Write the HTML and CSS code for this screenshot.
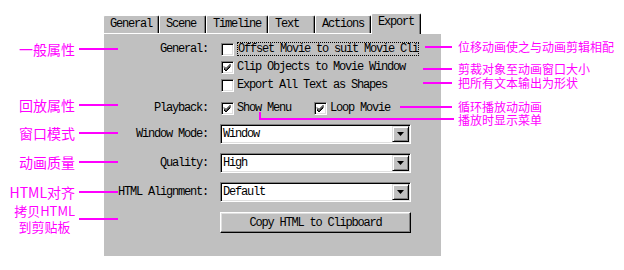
FILE: index.html
```html
<!DOCTYPE html>
<html lang="zh-CN">
  <head>
    <meta charset="UTF-8" />
    <meta name="viewport" content="width=device-width, initial-scale=1.0" />
    <title>Publish Settings - Export</title>
    <link rel="stylesheet" href="styles.css">
  </head>
  <body>
    <div class="stage">
      <div class="dialog">
        <div class="tabs">
          <span class="tab">General</span>
          <span class="tab">Scene</span>
          <span class="tab">Timeline</span>
          <span class="tab">Text</span>
          <span class="tab">Actions</span>
          <span class="tab active">Export</span>
        </div>

        <div class="panel">
          <div class="row">
            <span class="label">General:</span>
            <div class="checks">
              <div class="check">
                <span class="box"></span>
                <span class="focus">Offset Movie to suit Movie Clips</span>
              </div>
              <div class="check">
                <span class="box">
                  <svg viewBox="0 0 9 9" width="9" height="9"><path d="M1 3.5 L3 5.5 L7.5 1 M1 4.8 L3 6.8 L7.5 2.3 M1 6 L3 8 L7.5 3.5" stroke="#000" stroke-width="1" fill="none"/></svg>
                </span>
                <span>Clip Objects to Movie Window</span>
              </div>
              <div class="check">
                <span class="box"></span>
                <span>Export All Text as Shapes</span>
              </div>
            </div>
          </div>

          <div class="row row-playback">
            <span class="label">Playback:</span>
            <div class="inline-checks">
              <div class="check">
                <span class="box">
                  <svg viewBox="0 0 9 9" width="9" height="9"><path d="M1 3.5 L3 5.5 L7.5 1 M1 4.8 L3 6.8 L7.5 2.3 M1 6 L3 8 L7.5 3.5" stroke="#000" stroke-width="1" fill="none"/></svg>
                </span>
                <span>Show Menu</span>
              </div>
              <div class="check">
                <span class="box">
                  <svg viewBox="0 0 9 9" width="9" height="9"><path d="M1 3.5 L3 5.5 L7.5 1 M1 4.8 L3 6.8 L7.5 2.3 M1 6 L3 8 L7.5 3.5" stroke="#000" stroke-width="1" fill="none"/></svg>
                </span>
                <span>Loop Movie</span>
              </div>
            </div>
          </div>

          <div class="row row-select">
            <span class="label">Window Mode:</span>
            <div class="select">
              <span class="value">Window</span>
              <span class="drop"><svg viewBox="0 0 7 4" width="7" height="4"><path d="M0 0 H7 L3.5 4 Z" fill="#000"/></svg></span>
            </div>
          </div>

          <div class="row row-select">
            <span class="label">Quality:</span>
            <div class="select">
              <span class="value">High</span>
              <span class="drop"><svg viewBox="0 0 7 4" width="7" height="4"><path d="M0 0 H7 L3.5 4 Z" fill="#000"/></svg></span>
            </div>
          </div>

          <div class="row row-select">
            <span class="label">HTML Alignment:</span>
            <div class="select">
              <span class="value">Default</span>
              <span class="drop"><svg viewBox="0 0 7 4" width="7" height="4"><path d="M0 0 H7 L3.5 4 Z" fill="#000"/></svg></span>
            </div>
          </div>

          <div class="row row-button">
            <span class="label"></span>
            <button class="btn" type="button">Copy HTML to Clipboard</button>
          </div>
        </div>
      </div>

      <!-- callouts on the left -->
      <div class="note-l note-general"><span>一般属性</span><i class="line"></i></div>
      <div class="note-l note-playback"><span>回放属性</span><i class="line"></i></div>
      <div class="note-l note-window"><span>窗口模式</span><i class="line"></i></div>
      <div class="note-l note-quality"><span>动画质量</span><i class="line"></i></div>
      <div class="note-l note-align"><span>HTML对齐</span><i class="line"></i></div>
      <div class="note-l note-copy"><span class="two">拷贝HTML<br />到剪贴板</span><i class="line"></i></div>

      <!-- callouts on the right -->
      <div class="note-r note-offset"><i class="line"></i><span>位移动画使之与动画剪辑相配</span></div>
      <div class="note-r note-clip"><i class="line"></i><span>剪裁对象至动画窗口大小</span></div>
      <div class="note-r note-shapes"><i class="line"></i><span>把所有文本输出为形状</span></div>
      <div class="note-r note-loop"><i class="line"></i><span>循环播放动动画</span></div>
      <div class="bend"></div>
      <div class="note-r note-menu"><span>播放时显示菜单</span></div>
    </div>
  </body>
</html>
```

FILE: styles.css
```css
body {
  margin: 0;
  background: #fff;
  font-family: "Liberation Mono", monospace;
  font-size: 12px;
  letter-spacing: -1.2px;
  color: #000;
}

.stage {
  position: relative;
  width: 624px;
  height: 270px;
  overflow: hidden;
}

/* dialog */
.dialog {
  margin-left: 103px;
  padding-top: 13px;
  width: 338px;
}

.tabs {
  display: flex;
  align-items: flex-end;
  height: 20px;
  position: relative;
  z-index: 1;
}

.tab {
  box-sizing: border-box;
  min-width: 47px;
  height: 18px;
  line-height: 17px;
  padding: 0 6px;
  background: #c0c0c0;
  border-top: 1px solid #fff;
  border-left: 1px solid #fff;
  border-right: 1px solid #000;
  border-radius: 2px 2px 0 0;
  box-shadow: inset -1px 0 #808080;
  white-space: nowrap;
}

.tab.active {
  height: 21px;
  min-width: 50px;
  margin-bottom: -1px;
  line-height: 17px;
}

.panel {
  box-sizing: border-box;
  height: 223px;
  background: #c0c0c0;
  border-top: 1px solid #fff;
  border-left: 1px solid #fff;
  padding-top: 6px;
}

.row {
  display: flex;
  align-items: flex-start;
}

.label {
  flex: 0 0 104px;
  text-align: right;
  line-height: 18px;
  margin-right: 12px;
  white-space: nowrap;
}

.checks {
  display: flex;
  flex-direction: column;
}

.check {
  display: flex;
  align-items: center;
  height: 18px;
  white-space: nowrap;
}

.box {
  box-sizing: border-box;
  width: 13px;
  height: 13px;
  margin-left: 1px;
  margin-right: 3px;
  background: #fff;
  border: 1px solid;
  border-color: #808080 #fff #fff #808080;
  box-shadow: inset 1px 1px #000, inset -1px -1px #dfdfdf;
  display: flex;
  align-items: center;
  justify-content: center;
}

.box svg {
  display: block;
}

.focus {
  display: block;
  width: 180px;
  overflow: hidden;
  border: 1px dotted #000;
  line-height: 12px;
}

.row-playback {
  margin-top: 5px;
}

.inline-checks {
  display: flex;
  gap: 22px;
}

.row-select {
  align-items: center;
  margin-top: 7px;
}

.row-select + .row-select {
  margin-top: 9px;
}

.select {
  box-sizing: border-box;
  width: 191px;
  height: 20px;
  background: #fff;
  border: 1px solid;
  border-color: #808080 #fff #fff #808080;
  box-shadow: inset 1px 1px #000, inset -1px -1px #dfdfdf;
  display: flex;
  align-items: center;
  padding: 1px;
}

.select .value {
  flex: 1;
  padding-left: 1px;
}

.drop {
  box-sizing: border-box;
  width: 17px;
  height: 16px;
  background: #c0c0c0;
  border: 1px solid;
  border-color: #dfdfdf #000 #000 #dfdfdf;
  box-shadow: inset 1px 1px #fff, inset -1px -1px #808080;
  display: flex;
  align-items: center;
  justify-content: center;
}

.drop svg {
  display: block;
}

.row-button {
  margin-top: 10px;
}

.btn {
  box-sizing: border-box;
  width: 191px;
  height: 21px;
  background: #c0c0c0;
  border: 1px solid;
  border-color: #fff #000 #000 #fff;
  box-shadow: inset -1px -1px #808080, inset 1px 1px #dfdfdf;
  font: inherit;
  letter-spacing: inherit;
  color: #000;
  padding: 0;
}

/* callouts */
.note-l,
.note-r {
  position: absolute;
  display: flex;
  align-items: center;
  gap: 4px;
  z-index: 2;
  font-family: "Noto Sans CJK SC", sans-serif;
  color: #ff00ff;
  letter-spacing: 0;
  white-space: nowrap;
}

.note-l {
  right: 506px;
  font-size: 14px;
  line-height: 16px;
}

.note-r {
  left: 423px;
  font-size: 12px;
  line-height: 12px;
  gap: 6px;
}

.line {
  display: block;
  height: 2px;
  background: #ff00ff;
}

.note-l .line {
  width: 39px;
}

.note-r .line {
  width: 29px;
}

.note-general { top: 41px; }
.note-playback { top: 97px; }
.note-window { top: 125px; }
.note-quality { top: 154px; }
.note-align { top: 184px; }
.note-copy {
  top: 203px;
  text-align: center;
}

.note-copy .two {
  font-size: 13px;
  line-height: 16px;
}

.note-offset { top: 41px; left: 425px; }
.note-offset .line { width: 27px; }
.note-clip { top: 63px; }
.note-shapes { top: 77px; }
.note-loop { top: 101px; left: 400px; }
.note-loop .line { width: 52px; }
.note-menu { top: 114px; left: 458px; }

.bend {
  position: absolute;
  left: 259px;
  top: 112px;
  width: 193px;
  height: 6px;
  border-left: 2px solid #ff00ff;
  border-bottom: 2px solid #ff00ff;
  z-index: 2;
}
```
